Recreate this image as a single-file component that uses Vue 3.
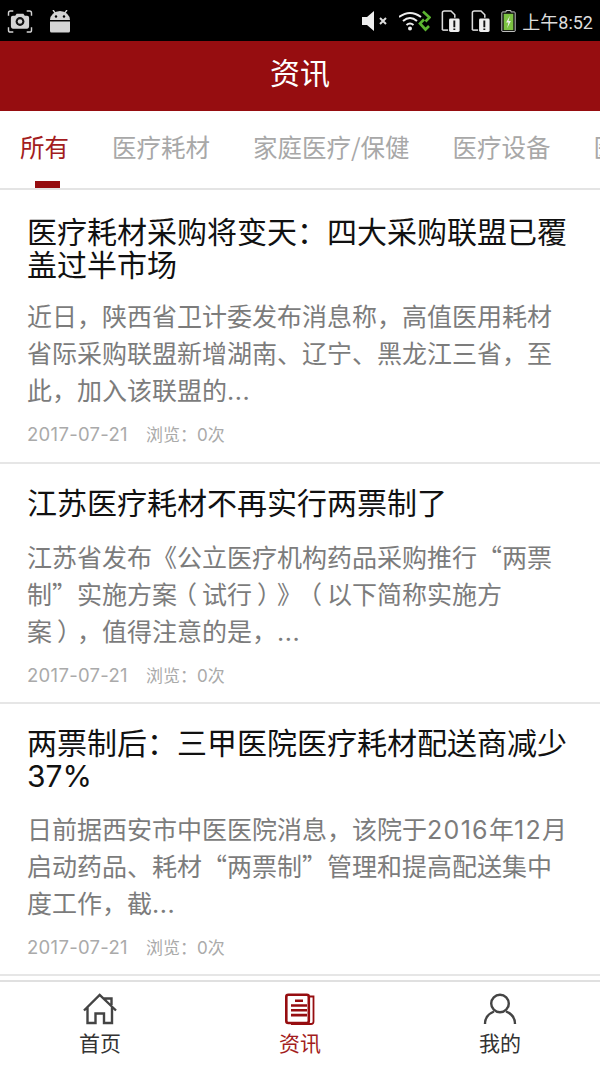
<script setup>
const tabs = ['所有', '医疗耗材', '家庭医疗/保健', '医疗设备', '医院']
const news = [
  { title: '医疗耗材采购将变天：四大采购联盟已覆盖过半市场', desc: '近日，陕西省卫计委发布消息称，高值医用耗材省际采购联盟新增湖南、辽宁、黑龙江三省，至此，加入该联盟的...' },
  { title: '江苏医疗耗材不再实行两票制了', desc: '江苏省发布《公立医疗机构药品采购推行“两票制”实施方案（试行）》（以下简称实施方案），值得注意的是，...' },
  { title: '两票制后：三甲医院医疗耗材配送商减少37%', desc: '日前据西安市中医医院消息，该院于2016年12月启动药品、耗材“两票制”管理和提高配送集中度工作，截...' }
]
// Latin runs take another face than the CJK text around them; brackets sit centred in their cell
const runs = (text) => text.split(/(\.\.\.|[0-9%-]+|[（）])/).filter(Boolean).map((t) => ({
  t,
  cls: t === '...' ? 'dots' : /^[0-9%-]+$/.test(t) ? 'lat' : t === '（' ? 'open' : t === '）' ? 'close' : ''
}))
</script>

<template>
  <div class="page">
    <div class="status">
      <div class="status-left">
        <svg width="26" height="23" viewBox="0 0 26 24">
          <path d="M1 6V3Q1 1 3 1H6M20 1H23Q25 1 25 3V6M25 18V21Q25 23 23 23H20M6 23H3Q1 23 1 21V18" fill="none" stroke="#d4d4d4" stroke-width="1.5"/>
          <path d="M3.500 8Q3.500 6 5.500 6H8L9.500 4H16.500L18 6H20.500Q22.500 6 22.500 8V17Q22.500 19.500 20.500 19.500H5.500Q3.500 19.500 3.500 17Z" fill="#d4d4d4"/>
          <circle cx="13" cy="12" r="4.600" fill="#111"/>
          <circle cx="13" cy="12" r="2.400" fill="#d4d4d4"/>
        </svg>
        <svg width="20" height="23" viewBox="0 0 20 23">
          <path d="M0 10A10 9 0 0 1 20 10Z" fill="#d4d4d4"/>
          <path d="M3 0L6 4M17 0L14 4" stroke="#d4d4d4" stroke-width="1.400"/>
          <circle cx="6" cy="6.500" r="1.200" fill="#000"/>
          <circle cx="14" cy="6.500" r="1.200" fill="#000"/>
          <path d="M0 11.500H20V21Q20 22.500 18.500 22.500H1.500Q0 22.500 0 21Z" fill="#d4d4d4"/>
        </svg>
      </div>
      <div class="status-right">
        <svg width="25" height="22" viewBox="0 0 25 22">
          <path d="M0 7H5L12 1V21L5 15H0Z" fill="#eee"/>
          <path d="M18 8L24 14M24 8L18 14" stroke="#ddd" stroke-width="2"/>
        </svg>
        <svg width="32" height="22" viewBox="0 0 32 22" class="ic-wifi">
          <path d="M0 7Q11 -1 22 7M4 11Q11 5 18 11M7.500 15Q11 12 14.500 15" fill="none" stroke="#eee" stroke-width="2"/>
          <circle cx="11" cy="18.500" r="2" fill="#eee"/>
          <path d="M24 1.500L30.500 7.500L26.500 11.500M25 9.500L21 13.500L26.500 19.500L30 16" fill="none" stroke="#5cb531" stroke-width="2.600"/>
        </svg>
        <svg width="19" height="22" viewBox="0 0 19 23" class="ic-sim1">
          <path d="M1 21V3Q1 1 3 1H10L14 5V8" fill="none" stroke="#ddd" stroke-width="1.600"/>
          <path d="M1 21H7" stroke="#ddd" stroke-width="1.600"/>
          <rect x="8" y="9" width="11" height="14" rx="1.500" fill="#eee"/>
          <path d="M13.500 11V18M13.500 19.300V21" stroke="#111" stroke-width="2"/>
        </svg>
        <svg width="19" height="22" viewBox="0 0 19 23">
          <path d="M1 21V3Q1 1 3 1H10L14 5V8" fill="none" stroke="#ddd" stroke-width="1.600"/>
          <path d="M1 21H7" stroke="#ddd" stroke-width="1.600"/>
          <rect x="8" y="9" width="11" height="14" rx="1.500" fill="#eee"/>
          <path d="M13.500 11V18M13.500 19.300V21" stroke="#111" stroke-width="2"/>
        </svg>
        <svg width="15" height="22" viewBox="0 0 15 23">
          <path d="M5 0.500H10V2H13.500Q14.500 2 14.500 3V22Q14.500 22.500 13.500 22.500H1.500Q0.500 22.500 0.500 22V3Q0.500 2 1.500 2H5Z" fill="#111" stroke="#ccc"/>
          <rect x="2.500" y="4" width="10" height="17" fill="#7cc242"/>
          <path d="M9 6L5 13H7.500L6 19L10 11.500H7.500Z" fill="#eee"/>
        </svg>
        <span class="clock">上午<span class="clock-num">8:52</span></span>
      </div>
    </div>

    <header class="bar">资讯</header>

    <nav class="tabs">
      <div v-for="(t, i) in tabs" :key="t" class="tab" :class="{ active: i === 0 }">
        {{ t }}
        <i v-if="i === 0" class="mark"></i>
      </div>
    </nav>

    <main class="list">
      <article v-for="n in news" :key="n.title" class="item">
        <h2 class="title"><span v-for="(r, i) in runs(n.title)" :key="i" :class="r.cls">{{ r.t }}</span></h2>
        <p class="desc"><span v-for="(r, i) in runs(n.desc)" :key="i" :class="r.cls">{{ r.t }}</span></p>
        <div class="meta">
          <span class="date">2017-07-21</span>
          <span>浏览：<span class="lat">0</span>次</span>
        </div>
      </article>
    </main>

    <footer class="foot">
      <div class="foot-tab">
        <svg width="34" height="32" viewBox="0 0 34 32">
          <path d="M1 17.500L16.700 2L33 17.500M4.500 14V30H12.500V20.500H21V30H29V14M21 5.500H28.500V12" fill="none" stroke="#444" stroke-width="2.400"/>
        </svg>
        <span>首页</span>
      </div>
      <div class="foot-tab on">
        <svg width="34" height="32" viewBox="0 0 34 32">
          <rect x="3.300" y="1.700" width="22.500" height="28.300" rx="2" fill="none" stroke="#960d10" stroke-width="2.600"/>
          <path d="M27 3.500H30.500V28.500Q30.500 31 28 31H8" fill="none" stroke="#960d10" stroke-width="1.800"/>
          <path d="M12 7.700H20M8 12.500H24M8 17.300H24M8 22.100H24" stroke="#960d10" stroke-width="2.600"/>
        </svg>
        <span>资讯</span>
      </div>
      <div class="foot-tab">
        <svg width="34" height="32" viewBox="0 0 34 32">
          <circle cx="17" cy="10.500" r="8.800" fill="none" stroke="#444" stroke-width="2.400"/>
          <path d="M2 31Q2 22 11 18.500M32 31Q32 22 23 18.500" fill="none" stroke="#444" stroke-width="2.400"/>
        </svg>
        <span>我的</span>
      </div>
    </footer>
  </div>
</template>

<style>
html, body { margin: 0; background: #fff; }
</style>

<style scoped>
.page {
  width: 600px;
  height: 1067px;
  overflow: hidden;
  display: flex;
  flex-direction: column;
  background: #fff;
  font-family: "Noto Sans CJK SC", sans-serif;
  text-spacing-trim: space-all;
}
.status {
  height: 41px;
  flex: none;
  box-sizing: border-box;
  background: #000;
  display: flex;
  align-items: center;
  justify-content: space-between;
  padding: 1px 7px 0;
}
.status-left { display: flex; align-items: center; gap: 17px; }
.status-right { display: flex; align-items: center; gap: 11px; }
.ic-wifi { margin-left: 1px; }
.ic-sim1 { margin-left: -1px; }
.clock { color: #ddd; font-size: 18px; margin-left: -5px; }
.clock-num { font-family: Roboto, sans-serif; }
.bar {
  height: 70px;
  flex: none;
  box-sizing: border-box;
  padding-bottom: 11px;
  background: #960d10;
  color: #fff;
  font-size: 30px;
  display: flex;
  align-items: center;
  justify-content: center;
}
.tabs {
  height: 77px;
  flex: none;
  display: flex;
  padding-left: 20px;
  gap: 43px;
  overflow: hidden;
  border-bottom: 2px solid #e4e4e4;
}
.tab {
  position: relative;
  flex: none;
  font-size: 24.5px;
  line-height: 71px;
  color: #a8a8a8;
}
.tab.active { color: #a31c20; }
.mark {
  position: absolute;
  left: 15px;
  bottom: 0;
  width: 25px;
  height: 7px;
  background: #960d10;
}
.list { flex: 1; min-height: 0; }
.item {
  padding: 21px 27px 15px;
  border-bottom: 2px solid #e6e6e6;
}
.item:first-child { padding: 24px 27px 16px; }
.item:first-child .desc { margin-top: 17px; }
.title {
  margin: 0;
  font-size: 30px;
  line-height: 33px;
  font-weight: 400;
  color: #111;
}
.desc {
  margin: 19.5px 0 0;
  font-size: 25px;
  line-height: 37px;
  color: #7c7c7c;
}
.lat { font-family: Inter, sans-serif; line-height: 0; }
.desc .lat { letter-spacing: 1.3px; }
.open { margin: 0 5px 0 -5px; }
.close { margin: 0 -5px 0 5px; }
.dots { font-family: Inter, sans-serif; letter-spacing: 0.5px; line-height: 0; }
.meta {
  margin-top: 14px;
  display: flex;
  gap: 18px;
  font-size: 17px;
  line-height: 24px;
  color: #aaa;
}
.date { font-family: Inter, sans-serif; font-size: 18.5px; letter-spacing: 0.3px; }
.foot {
  height: 87px;
  flex: none;
  box-sizing: border-box;
  border-top: 2px solid #e0e0e0;
  display: flex;
  padding-top: 11px;
  background: #fff;
}
.foot-tab {
  flex: 1;
  display: flex;
  flex-direction: column;
  align-items: center;
  color: #333;
  font-size: 21px;
  line-height: 30px;
}
.foot-tab svg { margin-bottom: 2px; }
.foot-tab.on { color: #a31c20; }
</style>
